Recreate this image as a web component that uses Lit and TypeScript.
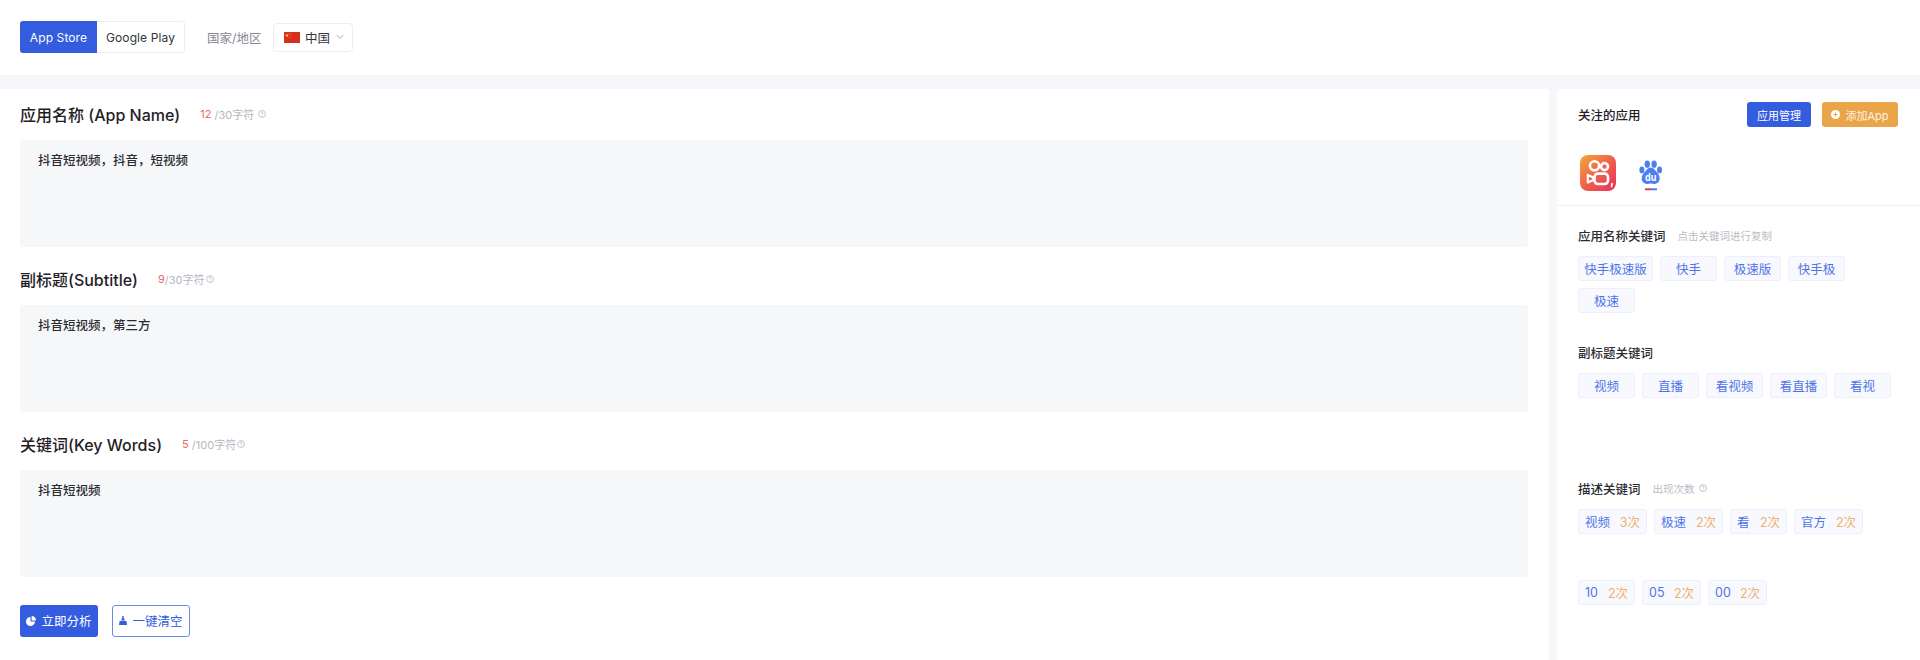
import { LitElement, html, css, svg } from "lit";
import { customElement } from "lit/decorators.js";

const help = (size = 8) => html`<svg class="help" width=${size} height=${size} viewBox="0 0 12 12" fill="none" stroke="#b4b7bf" stroke-width="1.200"><circle cx="6" cy="6" r="5.200"/><path d="M4.500 4.800a1.500 1.500 0 1 1 2.300 1.300c-.5.3-.8.6-.8 1.100"/><path d="M6 8.400v1"/></svg>`;

const flag = svg`<svg width="16" height="11" viewBox="0 0 16 11"><rect width="16" height="11" fill="#d5301f"/><path d="M3 1.400l.5 1.400 1.400 0-1.100.9.4 1.400-1.200-.8-1.200.8.4-1.400-1.100-.9 1.400 0z" fill="#f6d04a"/><circle cx="6" cy="1.500" r=".45" fill="#f6d04a"/><circle cx="7" cy="2.700" r=".45" fill="#f6d04a"/><circle cx="7" cy="4.100" r=".45" fill="#f6d04a"/><circle cx="6" cy="5.200" r=".45" fill="#f6d04a"/></svg>`;

const kuaishou = svg`<svg width="36" height="36" viewBox="0 0 36 36"><defs><linearGradient id="ks" x1="0" y1="0" x2="1" y2="1"><stop offset="0" stop-color="#f4a93a"/><stop offset=".5" stop-color="#f0604d"/><stop offset="1" stop-color="#e9305a"/></linearGradient></defs><rect width="36" height="36" rx="8" fill="url(#ks)"/><g fill="none" stroke="#fff" stroke-width="2.600"><circle cx="14.500" cy="10.800" r="4.600"/><circle cx="24.500" cy="11.600" r="3.500"/><rect x="14.500" y="18.600" width="13.500" height="10.400" rx="3.400"/><path d="M13.400 22.400l-5.600-2.400v7.400l5.600-2.400z" stroke-linejoin="round" stroke-width="2.200"/></g><path d="M31 28.200h2.200l-1 4h-1.400z" fill="#fff"/></svg>`;

const baidu = svg`<svg width="26" height="36" viewBox="0 0 26 36"><g transform="translate(0 4) scale(.9 1.030)"><g fill="#4e7ff0"><ellipse cx="9.200" cy="5" rx="3" ry="3.600"/><ellipse cx="16.800" cy="5" rx="3" ry="3.600"/><ellipse cx="3.200" cy="10.600" rx="2.800" ry="3.300"/><ellipse cx="22.800" cy="10.600" rx="2.800" ry="3.300"/><path d="M13 8.200c3 0 4.400 2.200 6.200 4 2 2 3.800 3.800 3.800 6.600 0 3.600-2.800 5.400-6 5.400-1.600 0-2.800-.5-4-.5s-2.400.5-4 .5c-3.200 0-6-1.800-6-5.400 0-2.800 1.800-4.600 3.800-6.600 1.800-1.800 3.200-4 6.200-4z"/></g><text x="13" y="21.500" text-anchor="middle" font-size="10" font-weight="700" font-family="Inter, sans-serif" fill="#fff">du</text></g><rect x="6" y="33.300" width="6" height="2" fill="#d8434a"/><rect x="12" y="33.300" width="6" height="2" fill="#4e7ff0"/></svg>`;

@customElement("app-root")
export class AppRoot extends LitElement {
  static styles = css`
    :host { display: block; width: 1920px; height: 660px; overflow: hidden; background: #f5f7fb; color: #1f2126;
      font-family: Inter, "Noto Sans CJK SC", sans-serif; font-size: 12.5px; }
    * { box-sizing: border-box; }
    .top { height: 75px; background: #fff; display: flex; align-items: center; padding: 0 20px 1px; margin-bottom: 14px; }
    .seg { display: flex; height: 32px; }
    .seg span { display: flex; align-items: center; justify-content: center; font-size: 12px; letter-spacing: .1px; }
    .seg .on { width: 77px; background: #335cdf; color: #fff; border-radius: 3px 0 0 3px; }
    .seg .off { width: 88px; color: #33363b; border: 1px solid #eceef2; border-left: 0; border-radius: 0 3px 3px 0; }
    .label { margin-left: 22px; color: #85888f; width: 66px; }
    .select { display: flex; align-items: center; width: 80px; height: 29px; border: 1px solid #eceef2; border-radius: 4px; padding-left: 10px; color: #33363b; }
    .select .name { margin-left: 5px; }
    .select .chev { margin-left: 6px; }
    .body { display: flex; height: 571px; gap: 8px; }
    .left { width: 1549px; background: #fff; padding: 0 21px 0 20px; border-radius: 0 4px 0 0; }
    .field-head { display: flex; align-items: center; height: 25px; padding-bottom: 3px; }
    .field-head h2 { margin: 0; font-size: 16px; font-weight: 500; color: #1f2126; }
    .count { display: flex; align-items: center; font-size: 11px; color: #b4b7bf; }
    .count b { font-weight: 400; color: #ea6a6a; }
    .count .help { margin-left: 4px; }
    .f1 { padding-top: 14px; }
    .f1 .count { margin-left: 20px; }
    .f2 { padding-top: 21px; }
    .f2 .count { margin-left: 20px; }
    .f2 .help { margin-left: 1px; }
    .box { margin-top: 12px; height: 107px; background: #f6f7f9; border-radius: 2px; padding: 11px 18px; font-size: 12.5px; font-weight: 500; line-height: 20px; color: #2a2c31; }
    .actions { display: flex; gap: 14px; margin-top: 28px; }
    .btn { display: flex; align-items: center; justify-content: center; gap: 5px; width: 78px; height: 32px; padding-bottom: 1px; border-radius: 3px; font-size: 12.5px; }
    .primary { background: #335cdf; color: #fff; }
    .ghost { background: #fff; border: 1px solid #6b8de8; color: #335cdf; }
    .right { flex: 1; background: #fff; border-radius: 4px 0 0 0; }
    .rhead { height: 117px; border-bottom: 1px solid #eff0f3; padding: 13px 22px 0 21px; }
    .rtop { display: flex; align-items: center; height: 25px; }
    .rtop h3 { margin: 0; font-size: 12.5px; font-weight: 500; flex: 1; color: #1f2126; }
    .rbtn { display: flex; align-items: center; justify-content: center; height: 25px; border-radius: 3px; font-size: 11px; color: #fff; gap: 5px; }
    .manage { width: 64px; background: #335cdf; }
    .add { width: 76px; margin-left: 11px; background: #e9a548; color: #fdf3e2; }
    .apps { display: flex; align-items: center; gap: 23px; margin-top: 28px; padding-left: 2px; }
    .sec { padding: 0 21px; }
    .sec-head { display: flex; align-items: center; height: 20px; padding-bottom: 2px; }
    .sec-head h4 { margin: 0; font-size: 12.5px; font-weight: 500; color: #2a2c31; }
    .sec-head span { display: flex; align-items: center; gap: 4px; font-size: 10.5px; color: #b9bcc3; margin-left: 12px; }
    .tags { display: flex; flex-wrap: wrap; gap: 7px; margin-top: 10px; }
    .tag { display: flex; align-items: center; justify-content: center; height: 25px; width: 57px; border: 1px solid #ecf0fb; border-radius: 3px; background: #f8f9fe; color: #4f74e6; font-size: 12.5px; white-space: nowrap; }
    .tag.wide { width: 75px; }
    .s1 { padding-top: 20px; height: 137px; }
    .s2 { height: 136px; }
    .s3 .tags { height: 96px; align-content: space-between; }
    .tag.kv { width: auto; justify-content: space-between; padding: 0 6px; }
    .tag.kv i { font-style: normal; color: #eeb26a; }
  `;

  private tag(t: string, wide = false) {
    return html`<div class="tag ${wide ? "wide" : ""}">${t}</div>`;
  }
  private kv(k: string, v: string, w: number) {
    return html`<div class="tag kv" style="width:${w}px"><span>${k}</span><i>${v}</i></div>`;
  }

  render() {
    return html`
      <div class="top">
        <div class="seg"><span class="on">App Store</span><span class="off">Google Play</span></div>
        <div class="label">国家/地区</div>
        <div class="select">${flag}<span class="name">中国</span>
          <svg class="chev" width="8" height="6" viewBox="0 0 8 6" fill="none" stroke="#a5a8ae" stroke-width="1"><path d="M.8 1.200L4 4.400l3.200-3.200"/></svg>
        </div>
      </div>
      <div class="body">
        <div class="left">
          <div class="f1">
            <div class="field-head"><h2>应用名称 (App Name)</h2><div class="count"><b>12</b>&nbsp;/30字符${help()}</div></div>
            <div class="box">抖音短视频，抖音，短视频</div>
          </div>
          <div class="f2">
            <div class="field-head"><h2>副标题(Subtitle)</h2><div class="count"><b>9</b>/30字符${help()}</div></div>
            <div class="box">抖音短视频，第三方</div>
          </div>
          <div class="f2">
            <div class="field-head"><h2>关键词(Key Words)</h2><div class="count"><b>5</b>&nbsp;/100字符${help()}</div></div>
            <div class="box">抖音短视频</div>
          </div>
          <div class="actions">
            <div class="btn primary">
              <svg width="10" height="10" viewBox="0 0 10 10" fill="#fff"><path d="M4.500 1v4.500H9A4.500 4.500 0 1 1 4.500 1z"/><path d="M5.600 0A4.400 4.400 0 0 1 10 4.400H5.600z"/></svg>
              立即分析
            </div>
            <div class="btn ghost">
              <svg width="8" height="9" viewBox="0 0 8 9" fill="#335cdf"><path d="M3.300 0h1.400v1.800L6 4.400H2l1.300-2.600z"/><path d="M.6 5h6.800l.6 4H0z"/></svg>
              一键清空
            </div>
          </div>
        </div>
        <div class="right">
          <div class="rhead">
            <div class="rtop">
              <h3>关注的应用</h3>
              <div class="rbtn manage">应用管理</div>
              <div class="rbtn add">
                <svg width="9" height="9" viewBox="0 0 9 9"><circle cx="4.500" cy="4.500" r="4.500" fill="#fff"/><path d="M2.500 4.500h4M4.500 2.500v4" stroke="#e9a548" stroke-width="1.200"/></svg>
                添加App
              </div>
            </div>
            <div class="apps">${kuaishou}${baidu}</div>
          </div>
          <div class="sec s1">
            <div class="sec-head"><h4>应用名称关键词</h4><span>点击关键词进行复制</span></div>
            <div class="tags">
              ${this.tag("快手极速版", true)}${this.tag("快手")}${this.tag("极速版")}${this.tag("快手极")}${this.tag("极速")}
            </div>
          </div>
          <div class="sec s2">
            <div class="sec-head"><h4>副标题关键词</h4></div>
            <div class="tags">
              ${this.tag("视频")}${this.tag("直播")}${this.tag("看视频")}${this.tag("看直播")}${this.tag("看视")}
            </div>
          </div>
          <div class="sec s3">
            <div class="sec-head"><h4>描述关键词</h4><span>出现次数 ${help()}</span></div>
            <div class="tags">
              ${this.kv("视频", "3次", 69)}${this.kv("极速", "2次", 69)}${this.kv("看", "2次", 57)}${this.kv("官方", "2次", 69)}
              ${this.kv("10", "2次", 57)}${this.kv("05", "2次", 59)}${this.kv("00", "2次", 59)}
            </div>
          </div>
        </div>
      </div>
    `;
  }
}
